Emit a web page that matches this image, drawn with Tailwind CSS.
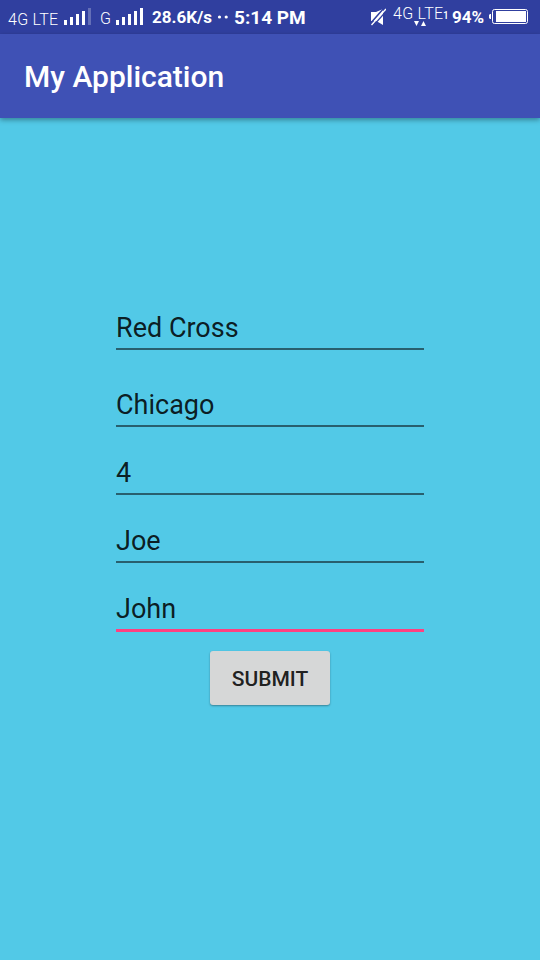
<!DOCTYPE html>
<html lang="en">
<head>
<meta charset="utf-8">
<title>My Application</title>
<script src="https://cdn.jsdelivr.net/npm/@tailwindcss/browser@4"></script>
</head>
<body class="flex h-[960px] w-[540px] flex-col overflow-hidden bg-[#52c9e7] font-['Roboto',sans-serif]">
  <div class="flex h-[34px] shrink-0 bg-[#303f9f] whitespace-nowrap text-white">
    <span class="ml-[8px] mt-[10px] w-[56px] text-[16px] leading-[20px] font-light tracking-[0.3px]">4G LTE</span>
    <svg class="mt-[8px] h-[17px] w-[27px]" viewBox="0 0 27 17" fill="#fff"><path d="M0 12h3v5H0zM6 9h3v8H6zM12 6h3v11h-3zM18 3h3v14h-3z"/><path opacity=".25" d="M24 0h3v17h-3z"/></svg>
    <span class="ml-[9px] mt-[9px] w-[16px] text-[16px] leading-[20px] font-light">G</span>
    <svg class="mt-[8px] h-[17px] w-[27px]" viewBox="0 0 27 17" fill="#fff"><path d="M0 12h3v5H0zM6 9h3v8H6zM12 6h3v11h-3zM18 3h3v14h-3zM24 0h3v17h-3z"/></svg>
    <span class="ml-[9px] mt-[7px] w-[65px] text-[17px] leading-[20px] font-bold">28.6K/s</span>
    <svg class="mt-[15px] h-[4px] w-[11px]" viewBox="0 0 11 4" fill="#fff"><circle cx="2.500" cy="2" r="1.6"/><circle cx="9.200" cy="2" r="1.6"/></svg>
    <span class="ml-[6px] mt-[7px] w-[76px] text-[19px] leading-[22px] font-bold">5:14 PM</span>
    <svg class="ml-[60px] mt-[8px] h-[18px] w-[16px]" viewBox="0 0 16 18" fill="#fff"><path d="M1 4h5l7-3v16l-5-3-2-1H1z"/><path d="M0 16L14 0" stroke="#303f9f" stroke-width="1.5"/><path d="M1.500 17L16 1" stroke="#fff" stroke-width="1.4"/><path d="M3.500 17.500L15.500 4" stroke="#303f9f" stroke-width="1.200"/></svg>
    <div class="ml-[7px] mt-[3px] w-[56px]">
      <div class="flex h-[18px] text-[16px] leading-[21px] font-light tracking-[0.3px]"><span class="w-[50px]">4G LTE</span><span class="text-[10px] leading-[25px] font-medium">1</span></div>
      <svg class="ml-[21px] h-[5px] w-[12px]" viewBox="0 0 12 5" fill="#fff"><path d="M0 0h5L2.500 5zM7 5h5L9.500 0z"/></svg>
    </div>
    <span class="ml-[3px] mt-[7px] w-[37px] text-[17px] leading-[20px] font-bold">94%</span>
    <svg class="mt-[9px] h-[15px] w-[39px]" viewBox="0 0 39 15" fill="#fff"><path d="M2 5v5H1L0 9V6l1-1z"/><rect x="3.500" y=".5" width="35" height="14" rx="2" fill="none" stroke="#fff"/><path d="M7 2h30v11H7z"/></svg>
  </div>
  <header class="relative flex h-[84px] shrink-0 items-center bg-[#3f51b5] pl-[24px] pt-[1px] shadow-[0_2px_5px_rgba(0,0,0,0.35)]">
    <h1 class="text-[30px] leading-[36px] font-medium text-white">My Application</h1>
  </header>
  <main class="flex flex-col items-center pt-[194px] text-[27px] leading-[32px] text-black/87">
    <div class="h-[38px] w-[308px] border-b-2 border-[#285f6e]">Red Cross</div>
    <div class="mt-[39px] h-[38px] w-[308px] border-b-2 border-[#285f6e]">Chicago</div>
    <div class="mt-[30px] h-[38px] w-[308px] border-b-2 border-[#285f6e]">4</div>
    <div class="mt-[30px] h-[38px] w-[308px] border-b-2 border-[#285f6e]">Joe</div>
    <div class="mt-[30px] h-[39px] w-[308px] border-b-3 border-[#ff4081]">John</div>
    <button class="mt-[19px] h-[54px] w-[120px] rounded-[3px] bg-[#d6d7d7] pt-[2px] text-[21px] font-medium text-black/87 shadow-[0_1px_2px_rgba(0,0,0,0.35)]">SUBMIT</button>
  </main>
</body>
</html>
